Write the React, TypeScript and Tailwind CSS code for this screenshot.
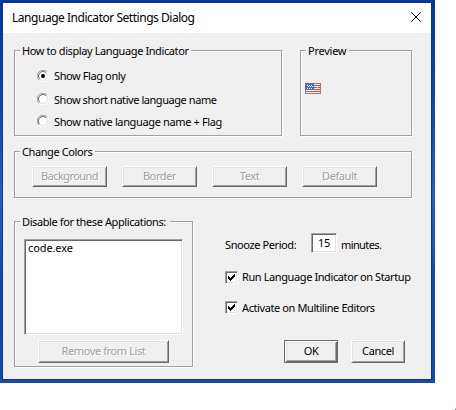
import React, { ReactNode } from "react";

function Group({ label, labelClass, className, children }: { label: string; labelClass: string; className: string; children?: ReactNode }) {
  return (
    <section className={`relative border border-[#a0a0a0] shadow-[1px_1px_0_#fff,inset_1px_1px_0_#fff] ${className}`}>
      <h2 className={`absolute -top-[7px] left-[5px] h-[14px] bg-[#f0f0f0] pl-[2px] leading-[14px] whitespace-nowrap ${labelClass}`}>{label}</h2>
      {children}
    </section>
  );
}

const raised = "border border-t-white border-l-white border-r-[#696969] border-b-[#696969] shadow-[inset_1px_1px_0_#e3e3e3,inset_-1px_-1px_0_#a0a0a0]";
const defaultRaised = "border border-[#696969] shadow-[inset_1px_1px_0_#fff,inset_-1px_-1px_0_#696969,inset_2px_2px_0_#e3e3e3,inset_-2px_-2px_0_#a0a0a0]";
const sunken = "border border-t-[#a0a0a0] border-l-[#a0a0a0] border-r-white border-b-white bg-white shadow-[inset_1px_1px_0_#696969,inset_-1px_-1px_0_#e3e3e3]";

function Button({ label, className, disabled = false, primary = false }: { label: string; className: string; disabled?: boolean; primary?: boolean }) {
  return (
    <button disabled={disabled} className={`flex items-center justify-center bg-[#f0f0f0] pb-[2px] leading-[14px] whitespace-nowrap ${primary ? defaultRaised : raised} ${disabled ? "text-[#a0a0a0] [text-shadow:1px_1px_0_#fff]" : "text-black"} ${className}`}>
      {label}
    </button>
  );
}

function Radio({ label, checked = false, className, textClass }: { label: string; checked?: boolean; className: string; textClass: string }) {
  return (
    <label className={`flex h-[14px] items-start ${className}`}>
      <svg width="12" height="12" viewBox="0 0 12 12" className="mr-[5px] shrink-0">
        <circle cx="6" cy="6" r="5" fill="#fff" />
        <path d="M1.9 10.1A5.5 5.5 0 0 1 10.1 1.9" fill="none" stroke="#a0a0a0" />
        <path d="M2.8 9.2A4.5 4.5 0 0 1 9.2 2.8" fill="none" stroke="#696969" />
        <path d="M9.2 2.8A4.5 4.5 0 0 1 2.8 9.2" fill="none" stroke="#e3e3e3" />
        <path d="M10.1 1.9A5.5 5.5 0 0 1 1.9 10.1" fill="none" stroke="#fff" />
        {checked && <circle cx="6" cy="6" r="2" fill="#000" />}
      </svg>
      <span className={`leading-[14px] whitespace-nowrap ${textClass}`}>{label}</span>
    </label>
  );
}

function Check({ label, className, textClass }: { label: string; className: string; textClass: string }) {
  return (
    <label className={`flex h-[13px] items-start ${className}`}>
      <span className={`mr-[4px] block h-[13px] w-[13px] shrink-0 ${sunken}`}>
        <svg width="11" height="11" viewBox="0 0 11 11" shapeRendering="crispEdges">
          <path d="M2 4h1v1h1v1h1v-1h1v-1h1v-1h1v-1h1v3h-1v1h-1v1h-1v1h-1v1h-1v-1h-1v-1h-1z" fill="#000" />
        </svg>
      </span>
      <span className={`leading-[14px] whitespace-nowrap ${textClass}`}>{label}</span>
    </label>
  );
}

function Flag() {
  return (
    <svg width="16" height="11" viewBox="0 0 16 11" shapeRendering="crispEdges">
      <rect width="16" height="11" fill="#fff" />
      <path d="M1 2h14v1H1zM1 4h14v1H1zM1 6h14v1H1zM1 8h14v1H1z" fill="#ee4438" />
      <rect x="1" y="1" width="8" height="6" fill="#2f6fe0" />
      <path d="M2 2h1v1H2zM4 2h1v1H4zM6 2h1v1H6zM3 3h1v1H3zM5 3h1v1H5zM7 3h1v1H7zM2 5h1v1H2zM4 5h1v1H4zM6 5h1v1H6z" fill="#fff" />
      <path d="M.5 7V.5H9" fill="none" stroke="#6868b8" />
      <path d="M9 .5h6.500v10H.5V7" fill="none" stroke="#c96a5c" />
      <path d="M13 3h1v1h-1zM12 4h1v1h-1z" fill="#ffc440" />
    </svg>
  );
}

export default function App() {
  return (
    <main className="relative h-[410px] w-[456px] overflow-hidden bg-white font-['Noto_Sans',sans-serif] text-[11px] tracking-[-0.4px] text-black">
      <div className="h-[383px] w-[435px] bg-[linear-gradient(180deg,#0037a8_0%,#0a46b8_25%,#1f5fcb_52%,#0b48b8_75%,#0f4cb8_100%)] pt-[2px] pl-[2px]">
        <div className="h-[378px] w-[430px] border border-[#1c3564] bg-[#f0f0f0]">
          <header className="flex h-[30px] items-start justify-between bg-white pr-[10px] pl-[9px]">
            <h1 className="pt-[7px] text-[12px] leading-[16px] tracking-[-0.47px]">Language Indicator Settings Dialog</h1>
            <svg width="10" height="10" viewBox="0 0 10 10" className="mt-[9px]"><path d="M.3.3l9.400 9.400M9.700.3l-9.400 9.400" stroke="#000" /></svg>
          </header>
          <div className="pt-[17px] pl-[11px]">
            <div className="flex gap-[18px]">
              <Group label="How to display Language Indicator" labelClass="w-[171px]" className="h-[86px] w-[268px] pt-[19px] pl-[22px]">
                <Radio checked label="Show Flag only" className="" textClass="-mt-px" />
                <Radio label="Show short native language name" className="mt-[9px]" textClass="tracking-[-0.44px]" />
                <Radio label="Show native language name + Flag" className="mt-[8px]" textClass="tracking-[-0.36px]" />
              </Group>
              <Group label="Preview" labelClass="w-[43px] tracking-[-0.25px]" className="h-[86px] w-[112px] pt-[32px] pl-[4px]">
                <Flag />
              </Group>
            </div>
            <Group label="Change Colors" labelClass="w-[75px]" className="mt-[15px] flex h-[47px] w-[398px] gap-[15px] pt-[14px] pl-[17px]">
              <Button disabled label="Background" className="h-[21px] w-[75px] tracking-[-0.55px]" />
              <Button disabled label="Border" className="h-[21px] w-[75px]" />
              <Button disabled label="Text" className="h-[21px] w-[75px]" />
              <Button disabled label="Default" className="h-[21px] w-[75px]" />
            </Group>
            <div className="mt-[23px] flex">
              <Group label="Disable for these Applications:" labelClass="w-[150px]" className="h-[146px] w-[179px] pt-[17px] pl-[9px]">
                <div className={`h-[96px] w-[159px] pt-px pl-[3px] leading-[14px] tracking-[-0.1px] ${sunken}`}>code.exe</div>
                <Button disabled label="Remove from List" className="mt-[5px] ml-[14px] h-[23px] w-[131px]" />
              </Group>
              <div className="ml-[32px] pt-[12px]">
                <div className="flex h-[20px]">
                  <span className="w-[86px] pt-[5px] leading-[14px]">Snooze Period:</span>
                  <span className={`flex h-[20px] w-[26px] justify-center pt-[2px] leading-[14px] ${sunken}`}>15</span>
                  <span className="pt-[5px] pl-[4px] leading-[14px] tracking-[-0.6px]">minutes.</span>
                </div>
                <Check label="Run Language Indicator on Startup" className="mt-[18px]" textClass="-mt-px" />
                <Check label="Activate on Multiline Editors" className="mt-[17px]" textClass="" />
                <div className="mt-[26px] ml-[59px] flex gap-[13px]">
                  <Button primary label="OK" className="h-[23px] w-[54px]" />
                  <Button label="Cancel" className="h-[23px] w-[54px]" />
                </div>
              </div>
            </div>
          </div>
        </div>
      </div>
      <span className="absolute right-0 bottom-0 h-px w-px bg-[#d03030]" />
    </main>
  );
}
